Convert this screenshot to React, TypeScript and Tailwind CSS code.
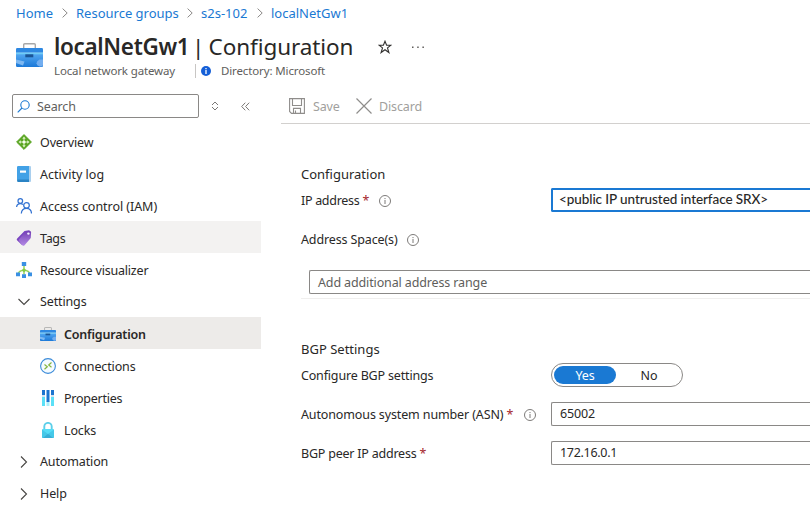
import type { ReactNode } from "react";

const Chevron = ({ className }: { className: string }) => (
  <svg viewBox="0 0 6 10" className={"h-[10px] w-[6px] shrink-0 " + className} fill="none" stroke="#8a8886">
    <path d="M.6.6 5.2 5 .6 9.4" />
  </svg>
);

const Toolbox = ({ className }: { className: string }) => (
  <svg viewBox="0 0 27 24" className={className} preserveAspectRatio="none">
    <defs>
      <linearGradient id="box" x1="0" y1="0" x2="0" y2="1">
        <stop offset="0" stopColor="#55a9f2" />
        <stop offset="1" stopColor="#1c79d8" />
      </linearGradient>
    </defs>
    <path d="M7.700 5.500V1.800Q7.700.8 8.700.8h9.600q1 0 1 1V5.500" fill="none" stroke="#a8a8a8" strokeWidth="1.400" />
    <path d="M0 10.500h27v12.300q0 1.200-1.200 1.200H1.200Q0 24 0 22.800Z" fill="url(#box)" />
    <path d="M0 6.200Q0 5 1.200 5h24.600Q27 5 27 6.200V9.800H0Z" fill="#2e88e2" />
    <path d="M0 9.700h27v1.600H0Z" fill="#6fcdf7" />
    <path d="M9.300 11.300h8v3h-8Z" fill="#1a5596" />
    <path d="M0 16.500 8.500 18.500 7 22.500 0 20Z" fill="#7db8f2" />
    <path d="M27 16.500h-3.500q-3 1.500-3 3.700t3 3.300h2.300L27 22.300Z" fill="#73aef0" />
  </svg>
);

const Info = () => (
  <svg viewBox="0 0 12 12" className="size-3 shrink-0" fill="none" stroke="#7d7b79">
    <circle cx="6" cy="6" r="5.500" strokeWidth="1" />
    <path d="M6 5v4M6 3v1.100" strokeWidth="1" />
  </svg>
);

const OverviewIcon = () => (
  <svg viewBox="0 0 16 16" className="size-4">
    <path d="M8 .6 15.400 8 8 15.400.6 8Z" fill="#5aa523" stroke="#5aa523" strokeLinejoin="round" />
    <path d="M8 4v8M4 8h8" stroke="#cfedb0" strokeWidth="1.100" />
    <path d="M8 2.500 9.700 4.800H6.300ZM8 13.500 6.300 11.200h3.400ZM2.500 8l2.300-1.700v3.400ZM13.500 8l-2.300 1.700V6.300Z" fill="#dff3cb" />
    <circle cx="8" cy="8" r="1.600" fill="#f5fcee" />
  </svg>
);

const LogIcon = () => (
  <svg viewBox="0 0 16 16" className="size-4">
    <rect x="2" y="0" width="13" height="16" rx="1" fill="#a9cfee" />
    <path d="M1 1.300Q1 0 2.300 0H13v14H3Q1 14 1 15Z" fill="#42a1e6" />
    <path d="M1 14.500Q1 13.500 2.500 13.500H13V16H2.200Q1 16 1 14.500Z" fill="#2a83c4" />
    <path d="M4 4.500h6v2.200H4Z" fill="#fff" />
  </svg>
);

const PeopleIcon = () => (
  <svg viewBox="0 0 16 16" className="size-4" fill="none" stroke="#3272d2" strokeWidth="1.250">
    <circle cx="4.300" cy="3" r="2.300" />
    <circle cx="10.500" cy="7.300" r="2.800" />
    <path d="M.6 9Q1 5.700 4.300 5.700q1.500 0 2.700.9M5.300 15.500q.4-5.200 5.200-5.200t5 5.200" />
  </svg>
);

const TagIcon = () => (
  <svg viewBox="0 0 16 16" className="size-4">
    <defs>
      <linearGradient id="tag" x1="0" y1="0" x2="0" y2="1">
        <stop offset="0" stopColor="#7440b4" />
        <stop offset="1" stopColor="#b48be6" />
      </linearGradient>
    </defs>
    <path d="m8.500 1 4.500-.8q1 0 .8 1L6 9.500l1 5-1 .5L1 10.200q-.7-1 .2-1.700Z" fill="#7a46c0" />
    <path d="m9.500 2 4.200-1q1.300 0 1.400 1.300L14.800 8l-6.500 7.500q-1 .7-1.800 0L3 11q-.6-1 .2-1.900Z" fill="url(#tag)" />
    <circle cx="12.400" cy="3.600" r="1.200" fill="#f4edff" />
  </svg>
);

const VisualizerIcon = () => (
  <svg viewBox="0 0 16 16" className="size-4">
    <path d="M8 3.500v9M7.500 8Q3 9 2.200 11.500M8.500 8q4.500 1 5.300 3.500" stroke="#9bd45b" strokeWidth="1.500" fill="none" />
    <circle cx="8" cy="8.300" r="1.700" fill="#86cb45" />
    <path d="M5.800 0h4.400v4H5.800ZM0 10.500h4v3.800H0ZM6 12.200h4V16H6ZM12 10.500h4v3.800h-4Z" fill="#3a90e3" />
  </svg>
);

const ConnectionsIcon = () => (
  <svg viewBox="0 0 16 16" className="size-4" fill="none">
    <circle cx="8" cy="8" r="7.400" fill="#f5fbff" stroke="#3b8bd9" strokeWidth="1.100" />
    <path d="m4.500 6.500 2.800 2.200-2.800 2.500M11.500 4.500 8.700 7l2.800 2.300" stroke="#86b540" strokeWidth="1.200" />
  </svg>
);

const PropertiesIcon = () => (
  <svg viewBox="0 0 16 16" className="size-4">
    <path d="M2 5h3v11H2ZM11 5h3v11h-3Z" fill="#5be0f7" />
    <path d="M6.500 11h3v5h-3Z" fill="#a9eefa" />
    <path d="M2 0h3v5H2ZM6.500 0h3v12h-3ZM11 0h3v5h-3Z" fill="#1d74cf" />
    <path d="M2 5h3v2H2ZM11 5h3v2h-3Z" fill="#cfe4f2" />
  </svg>
);

const LockIcon = () => (
  <svg viewBox="0 0 16 16" className="size-4">
    <path d="M4.300 8V4.600a3.700 3.700 0 0 1 7.400 0V8" fill="none" stroke="#5ccfe9" strokeWidth="1.900" />
    <rect x="2" y="7" width="12" height="9" rx="1" fill="#56dcf6" />
    <path d="m2 7.500 6 4.500-6 4ZM14 7.500 8 12l6 4Z" fill="#45c8e8" />
    <path d="M2.500 16 8 11.700 13.500 16Z" fill="#38aed6" />
  </svg>
);

type RowProps = { icon: ReactNode; label: string; className?: string; text?: string };

const Row = ({ icon, label, className = "", text = "pt-0.5" }: RowProps) => (
  <div className={"flex h-8 w-[261px] shrink-0 items-center gap-2 pt-0.5 " + className}>
    <span className="flex w-4 justify-center">{icon}</span>
    <span className={text}>{label}</span>
  </div>
);

const Arrow = () => (
  <svg viewBox="0 0 8 14" className="h-[14px] w-2" fill="none" stroke="#484644" strokeWidth="1.100">
    <path d="M1 1.500 6.500 7 1 12.500" />
  </svg>
);

const Star = () => <span className="ml-[3px] text-[#a4262c]">*</span>;

export default function App() {
  return (
    <div className="flex h-[507px] w-[810px] flex-col overflow-hidden bg-white font-['Noto_Sans','Open_Sans',sans-serif] text-[12.5px] leading-4 tracking-[-0.13px] whitespace-nowrap text-[#292827]">
      <nav className="flex h-[26px] shrink-0 items-center pl-4 text-[13px] tracking-normal text-[#1a79d3]">
        <span className="w-[46px]">Home</span>
        <Chevron className="mr-2" />
        <span className="w-[111px]">Resource groups</span>
        <Chevron className="mr-2" />
        <span className="w-[56px]">s2s-102</span>
        <Chevron className="mr-2" />
        <span>localNetGw1</span>
      </nav>
      <header className="flex h-[68px] shrink-0 pl-4">
        <Toolbox className="mt-[17px] h-6 w-[27px]" />
        <div className="ml-[11px]">
          <div className="flex h-[37px] items-center pt-[5px] text-[22.5px] leading-[36px]">
            <h1 className="w-[138px] font-semibold tracking-[-0.35px]">localNetGw1</h1>
            <span className="w-[16.5px]">|</span>
            <span className="w-[169.5px] tracking-[-0.08px]">Configuration</span>
            <svg viewBox="0 0 14 14" className="mr-5 h-[14px] w-[14px]" fill="none" stroke="#323130" strokeWidth="1.100">
              <path d="m7 1.200 1.600 4h4.300L9.500 7.900l1.400 4.600L7 9.700l-3.900 2.800 1.400-4.600-3.400-2.700h4.300Z" />
            </svg>
            <svg viewBox="0 0 12 2" className="h-0.5 w-3" fill="#605e5c">
              <path d="M0 .5h1.500V2H0ZM5.200.5h1.500V2H5.200ZM10.400.5h1.500V2h-1.500Z" />
            </svg>
          </div>
          <div className="flex items-center text-[11.500px] text-[#605e5c]">
            <span className="w-[141px]">Local network gateway</span>
            <span className="h-[14px] border-l border-[#c8c6c4]" />
            <svg viewBox="0 0 10 10" className="mr-[10px] ml-[5px] size-[10px]">
              <circle cx="5" cy="5" r="5" fill="#155fd7" />
              <path d="M5 4v4M5 2v1.200" stroke="#fff" strokeWidth="1.300" />
            </svg>
            <span>Directory: Microsoft</span>
          </div>
        </div>
      </header>
      <div className="flex min-h-0 flex-1">
        <aside className="flex w-[261px] shrink-0 flex-col">
          <div className="mb-[7px] flex h-6 shrink-0 items-center pl-3 text-[#605e5c]">
            <div className="flex h-6 w-[187px] items-center gap-[7px] rounded-[2px] border border-[#8a8886] pl-1">
              <svg viewBox="0 0 13 13" className="size-[13px]" fill="none" stroke="#1a79d3" strokeWidth="1.100">
                <circle cx="8" cy="5" r="4.200" />
                <path d="M5 8 .7 12.300" />
              </svg>
              <span className="pt-0.5">Search</span>
            </div>
            <svg viewBox="0 0 8 10" className="ml-3 h-[10px] w-2" fill="none" stroke="#7a7876">
              <path d="M1 4 4 1l3 3M1 6l3 3 3-3" />
            </svg>
            <svg viewBox="0 0 9 9" className="ml-[22px] size-[9px]" fill="none" stroke="#7a7876">
              <path d="M4.300.7.700 4.500l3.600 3.800M8.200.7 4.600 4.500l3.600 3.800" />
            </svg>
          </div>
          <Row className="pl-4" icon={<OverviewIcon />} label="Overview" />
          <Row className="pl-4" icon={<LogIcon />} label="Activity log" text="pt-0.5 tracking-[0.02px]" />
          <Row className="pl-4" icon={<PeopleIcon />} label="Access control (IAM)" text="pt-0.5 tracking-[-0.05px]" />
          <Row className="bg-[#f3f2f1] pl-4" icon={<TagIcon />} label="Tags" text="pt-0.5 tracking-[-0.3px]" />
          <Row className="pl-4" icon={<VisualizerIcon />} label="Resource visualizer" text="pt-0.5 tracking-[-0.2px]" />
          <Row
            className="pl-4"
            icon={
              <svg viewBox="0 0 14 8" className="h-2 w-[14px]" fill="none" stroke="#484644" strokeWidth="1.100">
                <path d="M1.500 1 7 6.500 12.500 1" />
              </svg>
            }
            label="Settings"
            text=""
          />
          <Row className="bg-[#edebe9] pl-10" icon={<Toolbox className="h-[14px] w-4" />} label="Configuration" text="pt-0.5 font-semibold tracking-[-0.2px]" />
          <Row className="pl-10" icon={<ConnectionsIcon />} label="Connections" />
          <Row className="pl-10" icon={<PropertiesIcon />} label="Properties" text="pt-0.5 tracking-[-0.25px]" />
          <Row className="pl-10" icon={<LockIcon />} label="Locks" />
          <Row className="pl-4" icon={<Arrow />} label="Automation" text="" />
          <Row className="pl-4" icon={<Arrow />} label="Help" text="" />
        </aside>
        <main className="ml-5 flex flex-1 flex-col">
          <div className="flex h-[30px] shrink-0 items-center border-b border-[#d2d0ce] pb-[6px] pl-2 text-[#a19f9d]">
            <svg viewBox="0 0 16 16" className="mr-2 size-4" fill="none" stroke="#8f8d8b" strokeWidth="1.100">
              <path d="M.6.600h14.800v14.800H2.500L.6 13.500ZM3.500.6v6.900h9V.6M4.500 15.400v-5h7v5M6.500 15v-2.500" />
            </svg>
            <span className="w-[43px] pt-0.5">Save</span>
            <svg viewBox="0 0 16 16" className="mr-[7px] size-4" fill="none" stroke="#8f8d8b" strokeWidth="1.200">
              <path d="m.5.5 15 15M15.500.5l-15 15" />
            </svg>
            <span className="pt-0.5">Discard</span>
          </div>
          <section className="flex flex-col pt-10 pl-5">
            <h2 className="h-6 text-[13px] leading-5 tracking-normal">Configuration</h2>
            <div className="flex h-6 items-center">
              <div className="flex w-[250px] items-center pt-0.5">
                <span className="tracking-[-0.3px]">IP address</span>
                <Star />
                <span className="ml-[10px]">
                  <Info />
                </span>
              </div>
              <div className="flex h-6 flex-1 items-center rounded-l-[2px] border-2 border-r-0 border-[#1a79d3] pb-0.5 pl-[6px] font-['Lato',sans-serif] text-[13.5px] font-medium tracking-[-0.08px]">
                &lt;public IP untrusted interface SRX&gt;
              </div>
            </div>
            <div className="mt-[15px] flex h-6 items-center gap-[9px] pt-0.5">
              <span>Address Space(s)</span>
              <Info />
            </div>
            <div className="mt-[19px] flex h-[29px] border-b border-[#f0efee] pl-2">
              <div className="flex h-6 flex-1 items-center rounded-l-[2px] border border-r-0 border-[#8a8886] pt-0.5 pl-2 text-[#605e5c]">
                Add additional address range
              </div>
            </div>
            <h2 className="mt-10 h-6 text-[13px] leading-5 tracking-normal">BGP Settings</h2>
            <div className="flex h-6 items-center">
              <span className="w-[250px] pt-0.5 tracking-[-0.17px]">Configure BGP settings</span>
              <div className="flex h-6 w-[132px] items-center rounded-full border border-[#8a8886] pl-0.5 text-center">
                <span className="h-[18px] w-[62px] rounded-full bg-[#1a79d3] leading-[20px] text-white">Yes</span>
                <span className="w-[66px] pt-0.5">No</span>
              </div>
            </div>
            <div className="mt-[15px] flex h-6 items-center">
              <div className="flex w-[250px] items-center pt-0.5">
                <span>Autonomous system number (ASN)</span>
                <Star />
                <span className="ml-[11px]">
                  <Info />
                </span>
              </div>
              <div className="flex h-6 flex-1 items-center rounded-l-[2px] border border-r-0 border-[#8a8886] pl-2">65002</div>
            </div>
            <div className="mt-[15px] flex h-6 items-center">
              <div className="flex w-[250px] items-center pt-0.5">
                <span className="tracking-[-0.22px]">BGP peer IP address</span>
                <Star />
              </div>
              <div className="flex h-6 flex-1 items-center rounded-l-[2px] border border-r-0 border-[#8a8886] pl-2 tracking-[-0.3px]">172.16.0.1</div>
            </div>
          </section>
        </main>
      </div>
    </div>
  );
}
